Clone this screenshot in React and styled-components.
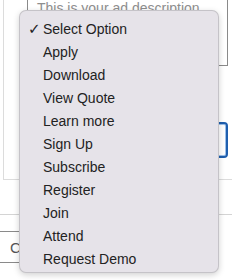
import React from "react";
import styled, { createGlobalStyle } from "styled-components";

const GlobalStyle = createGlobalStyle`
  html, body {
    margin: 0;
    padding: 0;
    background: #ffffff;
    overflow: hidden;
  }
  body {
    font-family: "Liberation Sans", Arial, sans-serif;
  }
`;

const Page = styled.div`
  position: relative;
  width: 232px;
  height: 280px;
  overflow: hidden;
`;

const Panel = styled.div`
  margin-left: 3px;
  width: 260px;
  height: 180px;
  box-sizing: border-box;
  border: 1px solid #dcdcdc;
  border-top: none;
  padding-left: 23px;
`;

const TextArea = styled.div`
  width: 201px;
  height: 66px;
  box-sizing: border-box;
  border: 1px solid #8a8a8a;
  border-top: none;
  padding-left: 9px;
  font-size: 14px;
  line-height: 17px;
  color: #8e8e8e;
  white-space: nowrap;
`;

const SelectBox = styled.div`
  margin-top: 56px;
  width: 201px;
  height: 36px;
  box-sizing: border-box;
  border: 2px solid #1f5fae;
  border-radius: 4px;
  box-shadow: inset 0 0 0 1px #9cc0ea;
`;

const Rule = styled.div`
  margin-top: 34px;
  height: 1px;
  background: #d4d4d4;
`;

const InputBox = styled.div`
  margin-top: 16px;
  margin-left: -5px;
  width: 140px;
  height: 32px;
  box-sizing: border-box;
  border: 1px solid #8a8a8a;
  padding-left: 14px;
  font-size: 15px;
  line-height: 32px;
  color: #555555;
`;

const Menu = styled.ul`
  position: absolute;
  left: 19px;
  top: 10px;
  width: 200px;
  height: 263px;
  box-sizing: border-box;
  margin: 0;
  padding: 7px 0 2px;
  list-style: none;
  background: #e6e3e9;
  border: 0.5px solid rgba(0, 0, 0, 0.14);
  border-radius: 7px;
  box-shadow: 0 2px 6px rgba(0, 0, 0, 0.18);
`;

const Item = styled.li`
  position: relative;
  height: 23px;
  line-height: 23px;
  padding-left: 23px;
  font-size: 14px;
  color: #222222;
  white-space: nowrap;
`;

const Check = styled.span`
  position: absolute;
  left: 8px;
  top: 0;
  font-size: 15px;
  font-family: "DejaVu Sans", sans-serif;
  color: #222222;
`;

const options = [
  "Select Option",
  "Apply",
  "Download",
  "View Quote",
  "Learn more",
  "Sign Up",
  "Subscribe",
  "Register",
  "Join",
  "Attend",
  "Request Demo",
];

const App = () => {
  return (
    <Page>
      <GlobalStyle />
      <Panel>
        <TextArea>This is your ad description</TextArea>
        <SelectBox />
      </Panel>
      <Rule />
      <InputBox>C</InputBox>
      <Menu>
        {options.map((o, i) => (
          <Item key={o}>
            {i === 0 && <Check>✓</Check>}
            {o}
          </Item>
        ))}
      </Menu>
    </Page>
  );
};

export default App;
